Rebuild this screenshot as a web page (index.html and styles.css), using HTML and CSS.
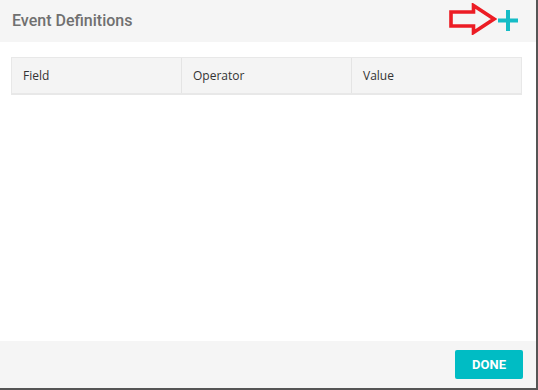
FILE: index.html
```html
<!DOCTYPE html>
<html>
<head>
<meta charset="utf-8">
<link rel="stylesheet" href="styles.css">
</head>
<body>
<div class="frame">
  <div class="dialog">
    <div class="header">
      <div class="title">Event Definitions</div>
      <div class="actions">
        <svg class="arrow" width="48" height="32" viewBox="0 0 48 32">
          <path d="M2 9 H24.5 V2.5 L45 16 L24.5 29.5 V23 H2 Z" fill="none" stroke="#ec1c24" stroke-width="3.6" stroke-linejoin="miter"/>
        </svg>
        <svg class="plus" width="20" height="21" viewBox="0 0 20 21">
          <rect x="8" y="0" width="4" height="21" fill="#15bcc6"/>
          <rect x="0" y="8.5" width="20" height="4" fill="#15bcc6"/>
        </svg>
      </div>
    </div>
    <div class="body">
      <div class="table">
        <div class="cell">Field</div>
        <div class="cell">Operator</div>
        <div class="cell">Value</div>
      </div>
    </div>
    <div class="footer">
      <button class="done">DONE</button>
    </div>
  </div>
</div>
</body>
</html>
```

FILE: styles.css
```css
html, body {
  margin: 0;
  padding: 0;
  background: #ffffff;
}
.frame {
  width: 536px;
  height: 388px;
  border-right: 2px solid #555555;
  border-bottom: 2px solid #555555;
}
.dialog {
  display: flex;
  flex-direction: column;
  height: 388px;
  background: #ffffff;
}
.header {
  height: 42px;
  background: #f5f5f5;
  display: flex;
  align-items: center;
  justify-content: space-between;
  padding: 0 18px 0 12px;
}
.title {
  font-family: Roboto, "Liberation Sans", sans-serif;
  font-weight: 500;
  font-size: 16px;
  color: #707070;
  margin-top: -1px;
}
.actions {
  display: flex;
  align-items: center;
  gap: 1px;
  margin-top: -4px;
}
.arrow {
  display: block;
  margin-top: -1px;
}
.plus {
  display: block;
  margin-top: 3px;
}
.body {
  flex: 1;
  padding: 15px 14px 0 11px;
}
.table {
  display: grid;
  grid-template-columns: 170px 170px 1fr;
  background: #f4f4f4;
  border: 1px solid #e8e8e8;
  border-bottom: 2px solid #e8e8e8;
  box-sizing: border-box;
  height: 38px;
}
.cell {
  font-family: "Open Sans", "Noto Sans", sans-serif;
  font-size: 12px;
  color: #333333;
  padding-left: 11px;
  display: flex;
  align-items: center;
  border-right: 1px solid #e4e4e4;
}
.cell:last-child {
  border-right: none;
}
.footer {
  height: 47px;
  background: #f5f5f5;
  display: flex;
  align-items: flex-start;
  justify-content: flex-end;
  padding: 9px 13px 0 0;
  box-sizing: border-box;
}
.done {
  width: 68px;
  height: 29px;
  background: #00bcc4;
  border: none;
  border-radius: 2px;
  color: #ffffff;
  font-family: Roboto, "Liberation Sans", sans-serif;
  font-weight: 700;
  font-size: 13px;
  padding: 0;
}
```
